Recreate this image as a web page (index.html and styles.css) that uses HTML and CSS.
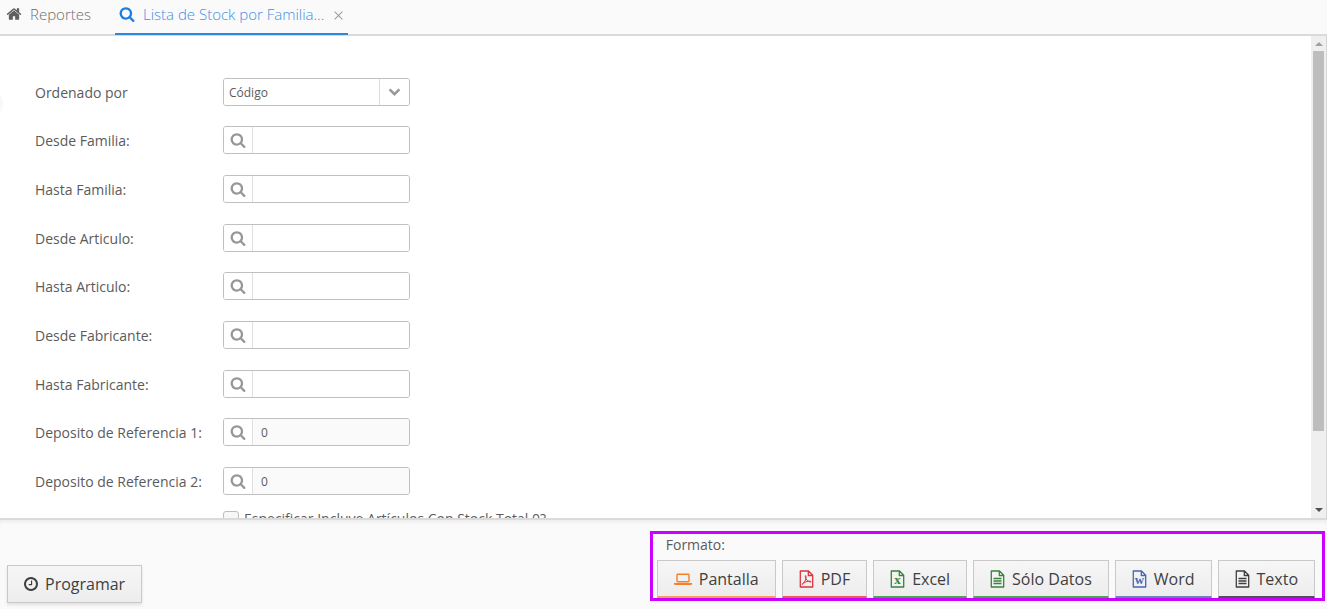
FILE: index.html
```html
<!DOCTYPE html>
<html lang="es">

<head>
  <meta charset="UTF-8">
  <meta name="viewport" content="width=device-width, initial-scale=1.0">
  <title>Lista de Stock por Familia</title>

  <link rel="stylesheet" href="styles.css">
</head>

<body>
  <svg class="sprite" aria-hidden="true">
    <symbol id="search" viewBox="0 0 1792 1792">
      <path d="M1216 832q0-185-131.5-316.5t-316.5-131.5-316.5 131.5-131.5 316.5 131.5 316.5 316.5 131.5 316.5-131.5 131.5-316.5zm512 832q0 52-38 90t-90 38q-54 0-90-38l-343-342q-179 124-399 124-143 0-273.5-55.5t-225-150-150-225-55.5-273.5 55.5-273.5 150-225 225-150 273.5-55.5 273.5 55.5 225 150 150 225 55.5 273.5q0 220-124 399l343 343q37 37 37 90z"/>
    </symbol>
    <symbol id="home" viewBox="0 0 1792 1792">
      <path d="M1472 992v480q0 26-19 45t-45 19h-384v-384h-256v384h-384q-26 0-45-19t-19-45v-480q0-1 .5-3t.5-3l575-474 575 474q1 2 1 6zm223-69l-62 74q-8 9-21 11h-3q-13 0-21-7l-692-577-692 577q-12 8-24 7-13-2-21-11l-62-74q-8-10-7-23.5t11-21.5l719-599q32-26 76-26t76 26l244 204v-195q0-14 9-23t23-9h192q14 0 23 9t9 23v408l219 182q10 8 11 21.5t-7 23.5z"/>
    </symbol>
    <symbol id="clock" viewBox="128 128 1536 1536">
      <path d="M1024 544v448q0 14-9 23t-23 9h-320q-14 0-23-9t-9-23v-64q0-14 9-23t23-9h224v-352q0-14 9-23t23-9h64q14 0 23 9t9 23zm416 352q0-148-73-273t-198-198-273-73-273 73-198 198-73 273 73 273 198 198 273 73 273-73 198-198 73-273zm224 0q0 209-103 385.5t-279.5 279.5-385.5 103-385.5-103-279.5-279.5-103-385.5 103-385.5 279.5-279.5 385.5-103 385.5 103 279.5 279.5 103 385.5z"/>
    </symbol>
    <symbol id="file" viewBox="0 0 15 18">
      <path d="M1.300 1h8.200l4.200 4.200v11.800H1.300zM9.300 1v4.500h4.400" fill="none" stroke="currentColor" stroke-width="1.300" stroke-linejoin="round"/>
    </symbol>
  </svg>

  <div class="app">
    <nav class="tabs">
      <a class="tab" href="#"><svg class="icon"><use href="#home"/></svg>Reportes</a>
      <div class="tab active">
        <a href="#"><svg class="icon"><use href="#search"/></svg>Lista de Stock por Familia...</a>
        <button class="close" type="button" aria-label="Cerrar"></button>
      </div>
    </nav>

    <main class="panel">
      <form class="fields">
        <div class="field">
          <label for="orden">Ordenado por</label>
          <div class="control">
            <select id="orden">
              <option>Código</option>
            </select>
            <svg class="arrow" viewBox="0 0 12 8"><path d="M1.500 1.500L6 6l4.500-4.500"/></svg>
          </div>
        </div>
        <div class="field">
          <label for="desde-familia">Desde Familia:</label>
          <div class="control">
            <button class="lookup" type="button" aria-label="Buscar"><svg class="icon"><use href="#search"/></svg></button>
            <input id="desde-familia" type="text">
          </div>
        </div>
        <div class="field">
          <label for="hasta-familia">Hasta Familia:</label>
          <div class="control">
            <button class="lookup" type="button" aria-label="Buscar"><svg class="icon"><use href="#search"/></svg></button>
            <input id="hasta-familia" type="text">
          </div>
        </div>
        <div class="field">
          <label for="desde-articulo">Desde Articulo:</label>
          <div class="control">
            <button class="lookup" type="button" aria-label="Buscar"><svg class="icon"><use href="#search"/></svg></button>
            <input id="desde-articulo" type="text">
          </div>
        </div>
        <div class="field">
          <label for="hasta-articulo">Hasta Articulo:</label>
          <div class="control">
            <button class="lookup" type="button" aria-label="Buscar"><svg class="icon"><use href="#search"/></svg></button>
            <input id="hasta-articulo" type="text">
          </div>
        </div>
        <div class="field">
          <label for="desde-fabricante">Desde Fabricante:</label>
          <div class="control">
            <button class="lookup" type="button" aria-label="Buscar"><svg class="icon"><use href="#search"/></svg></button>
            <input id="desde-fabricante" type="text">
          </div>
        </div>
        <div class="field">
          <label for="hasta-fabricante">Hasta Fabricante:</label>
          <div class="control">
            <button class="lookup" type="button" aria-label="Buscar"><svg class="icon"><use href="#search"/></svg></button>
            <input id="hasta-fabricante" type="text">
          </div>
        </div>
        <div class="field">
          <label for="deposito-1">Deposito de Referencia 1:</label>
          <div class="control">
            <button class="lookup" type="button" aria-label="Buscar"><svg class="icon"><use href="#search"/></svg></button>
            <input id="deposito-1" class="filled" type="text" value="0">
          </div>
        </div>
        <div class="field">
          <label for="deposito-2">Deposito de Referencia 2:</label>
          <div class="control">
            <button class="lookup" type="button" aria-label="Buscar"><svg class="icon"><use href="#search"/></svg></button>
            <input id="deposito-2" class="filled" type="text" value="0">
          </div>
        </div>
        <div class="check">
          <input id="stock-cero" type="checkbox">
          <label for="stock-cero">Especificar Incluye Artículos Con Stock Total 0?</label>
        </div>
      </form>
      <div class="scrollbar" aria-hidden="true">
        <span class="up"></span>
        <div class="track"><div class="thumb"></div></div>
        <span class="down"></span>
      </div>
    </main>

    <footer class="actions">
      <button class="button programar" type="button"><svg class="icon"><use href="#clock"/></svg>Programar</button>
      <div class="formats">
        <p class="title">Formato:</p>
        <div class="list">
          <button class="button screen" type="button">
            <svg class="icon" viewBox="0 0 18 18"><path d="M3.700 4.200h10.600q.7 0 .7.700v6.200q0 .7-.7.700H3.700q-.7 0-.7-.7V4.900q0-.7.700-.7z" fill="none" stroke="currentColor" stroke-width="1.400"/><path d="M0 13h18v.9q0 1-1.500 1h-15q-1.500 0-1.500-1z"/></svg>Pantalla</button>
          <button class="button pdf" type="button">
            <svg class="icon" viewBox="0 0 15 18"><use href="#file" width="15" height="18"/><path d="M3.400 14.300c1.800-1 3.900-5 3.700-8 0-1-1-1-.9.200.2 2.500 2.500 5.200 5.200 5.600 1 .1.900-1-.4-1-2.600 0-5.400 1-7.200 2.300-.9.700-.9 1.100-.4.900z" fill="none" stroke="currentColor"/></svg>PDF</button>
          <button class="button excel" type="button">
            <svg class="icon" viewBox="0 0 15 18"><use href="#file" width="15" height="18"/><text class="mark" x="7.500" y="14">x</text></svg>Excel</button>
          <button class="button data" type="button">
            <svg class="icon" viewBox="0 0 15 18"><use href="#file" width="15" height="18"/><path d="M3.500 8.500h8M3.500 11h8M3.500 13.500h8" stroke="currentColor" stroke-width="1.300"/></svg>Sólo Datos</button>
          <button class="button word" type="button">
            <svg class="icon" viewBox="0 0 15 18"><use href="#file" width="15" height="18"/><text class="mark" x="7.500" y="14">w</text></svg>Word</button>
          <button class="button text" type="button">
            <svg class="icon" viewBox="0 0 15 18"><use href="#file" width="15" height="18"/><path d="M3.500 8.500h8M3.500 11h8M3.500 13.500h8" stroke="currentColor" stroke-width="1.300"/></svg>Texto</button>
        </div>
      </div>
    </footer>
  </div>
</body>

</html>
```
FILE: styles.css
```css
* {
  box-sizing: border-box;
}

body {
  margin: 0;
  font-family: "Open Sans", "Noto Sans", sans-serif;
  font-size: 14px;
  line-height: 20px;
  color: #5b5b5b;
  background-color: #fff;
}

button,
input,
select {
  font-family: inherit;
  color: inherit;
}

a {
  color: inherit;
  text-decoration: none;
}

.sprite {
  position: absolute;
  width: 0;
  height: 0;
}

.icon {
  flex: none;
  width: 16px;
  height: 16px;
  fill: currentColor;
}

.app {
  display: flex;
  flex-direction: column;
  height: 100vh;
  margin-right: 10px;
}

/* tabs */
.tabs {
  display: flex;
  gap: 24px;
  height: 36px;
  padding-left: 6px;
  border-bottom: 2px solid #dadada;
  background-color: #fafafa;
  font-size: 15px;
  font-weight: 300;
}

.tab,
.tab a {
  display: flex;
  align-items: center;
  color: #6e6e6e;
}

.tab {
  height: 35px;
  padding-bottom: 8px;
}

.tab .icon {
  margin-right: 8px;
  color: #5f5f5f;
}

.tab.active {
  padding: 0 4px 6px;
  border-bottom: 2px solid #2f86e0;
}

.tab.active a {
  color: #3f8fe6;
}

.tab.active .icon {
  color: #197de1;
}

.tab .close {
  position: relative;
  width: 11px;
  height: 11px;
  margin-top: 4px;
  margin-left: 9px;
  padding: 0;
  border: none;
  background-color: transparent;
  cursor: pointer;
}

.tab .close::before,
.tab .close::after {
  content: '';
  position: absolute;
  top: 5px;
  left: 0;
  width: 11px;
  height: 1px;
  transform: rotate(45deg);
  background-color: #9a9a9a;
}

.tab .close::after {
  transform: rotate(-45deg);
}

/* form */
.panel {
  position: relative;
  display: flex;
  flex: 1;
  min-height: 0;
  border-right: 1px solid #d6d6d6;
}

/* handle of the collapsed side menu */
.panel::before {
  content: '';
  position: absolute;
  top: 52px;
  left: -27px;
  width: 30px;
  height: 30px;
  border-radius: 50%;
  background-color: #f8f8f8;
}

.fields {
  flex: 1;
  overflow: hidden;
  padding: 42px 0 0 35px;
}

.field {
  display: flex;
  align-items: center;
  margin-bottom: 21px;
}

.field:nth-child(3n+1) {
  margin-bottom: 20px;
}

.field label {
  width: 188px;
  padding-top: 2px;
}

.control {
  position: relative;
  display: flex;
  width: 187px;
  height: 28px;
  border: 1px solid #c0c0c0;
  border-radius: 3px;
  overflow: hidden;
}

.control input,
.control select {
  flex: 1;
  min-width: 0;
  padding: 0 8px;
  border: none;
  outline: none;
  background-color: #fff;
  font-size: 12px;
}

.control select {
  padding: 0 5px;
  appearance: none;
}

.control .filled {
  background-color: #fafafa;
}

.control .arrow {
  position: absolute;
  top: 0;
  right: 0;
  width: 30px;
  height: 26px;
  padding: 8px;
  border-left: 1px solid #dcdcdc;
  fill: none;
  stroke: #999;
  stroke-width: 2.3;
  pointer-events: none;
}

.lookup {
  display: flex;
  align-items: center;
  justify-content: center;
  width: 29px;
  padding: 0;
  border: none;
  border-right: 1px solid #e0e0e0;
  background-color: #fff;
  cursor: pointer;
}

.lookup .icon {
  color: #979797;
}

.check {
  display: flex;
  gap: 5px;
  margin: -10px 0 0 188px;
}

.check input {
  appearance: none;
  flex: none;
  width: 16px;
  height: 16px;
  margin: 5px 0 0;
  border: 1px solid #bdbdbd;
  border-radius: 3px;
  background-color: #f7f7f7;
}

.check label {
  padding-top: 3px;
}

.scrollbar {
  display: flex;
  flex-direction: column;
  align-items: center;
  width: 15px;
  padding: 6px 0;
  background-color: #efefef;
}

.scrollbar .up,
.scrollbar .down {
  border: 4px solid transparent;
  border-top: none;
  border-bottom-color: #a0a0a0;
}

.scrollbar .down {
  border-top: 4px solid #505050;
  border-bottom: none;
}

.scrollbar .track {
  flex: 1;
  width: 11px;
  margin: 5px 0;
}

.scrollbar .thumb {
  height: 84%;
  background-color: #bdbdbd;
}

/* actions */
.actions {
  display: flex;
  align-items: flex-end;
  justify-content: space-between;
  padding: 11px 2px 6px 7px;
  border-top: 2px solid #dadada;
  background-color: #fafafa;
  box-shadow: inset 0 4px 4px -2px #0000000f;
}

.button {
  display: flex;
  align-items: center;
  gap: 7px;
  height: 38px;
  padding: 0 16px;
  border: 1px solid #c9c9c9;
  background-image: linear-gradient(#f6f6f6, #ededed);
  font-size: 16px;
  color: #3f3f3f;
  white-space: nowrap;
  cursor: pointer;
}

.button:hover {
  background-image: linear-gradient(#fff, #f2f2f2);
}

.programar {
  box-shadow: 0 2px 3px #0000001a;
}

.programar .icon {
  width: 14px;
  height: 14px;
}

.formats {
  margin-bottom: 2px;
  padding: 1px 7px 0 4px;
  border: 3px solid #cc00ff;
}

.formats .title {
  margin: 0 0 5px 9px;
}

.formats .list {
  display: flex;
  gap: 6px;
}

.formats .button {
  border-bottom: 2px solid;
}

.formats .icon {
  width: 15px;
  height: 18px;
}

.formats .screen .icon {
  width: 18px;
}

.mark {
  font-family: "Liberation Serif", serif;
  font-size: 13px;
  font-weight: bold;
  text-anchor: middle;
}

.formats .screen {
  border-bottom-color: #f79a5b;
}

.screen .icon {
  color: #fb7d26;
}

.formats .pdf {
  border-bottom-color: #ee5a5a;
}

.pdf .icon {
  color: #d9353f;
}

.formats .excel,
.formats .data {
  border-bottom-color: #4aa350;
}

.excel .icon,
.data .icon {
  color: #37843a;
}

.formats .word {
  border-bottom-color: #6584b8;
}

.word .icon {
  color: #4468b0;
}

.formats .text {
  border-bottom-color: #505050;
}
```
